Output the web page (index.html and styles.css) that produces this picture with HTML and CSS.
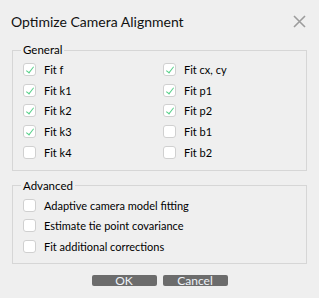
FILE: index.html
```html
<html>
<head>
	<title>Optimize Camera Alignment</title>
	<link rel="stylesheet" href="styles.css">
</head>
<body>

<div class="dialog">
	<div class="titlebar">
		<span class="title">Optimize Camera Alignment</span>
		<svg class="close" width="13" height="13" viewBox="0 0 13 13">
			<path d="M1 1L12 12M12 1L1 12" stroke="#9c9c9c" stroke-width="1.6" fill="none"/>
		</svg>
	</div>

	<fieldset class="group">
		<legend>General</legend>
		<div class="grid">
			<label class="check on"><span class="box"></span>Fit f</label>
			<label class="check on"><span class="box"></span>Fit cx, cy</label>
			<label class="check on"><span class="box"></span>Fit k1</label>
			<label class="check on"><span class="box"></span>Fit p1</label>
			<label class="check on"><span class="box"></span>Fit k2</label>
			<label class="check on"><span class="box"></span>Fit p2</label>
			<label class="check on"><span class="box"></span>Fit k3</label>
			<label class="check"><span class="box"></span>Fit b1</label>
			<label class="check"><span class="box"></span>Fit k4</label>
			<label class="check"><span class="box"></span>Fit b2</label>
		</div>
	</fieldset>

	<fieldset class="group advanced">
		<legend>Advanced</legend>
		<div class="list">
			<label class="check"><span class="box"></span>Adaptive camera model fitting</label>
			<label class="check"><span class="box"></span>Estimate tie point covariance</label>
			<label class="check"><span class="box"></span>Fit additional corrections</label>
		</div>
	</fieldset>

	<div class="buttons">
		<button class="btn">OK</button>
		<button class="btn">Cancel</button>
	</div>
</div>

</body>
</html>
```

FILE: styles.css
```css
body {
	margin: 0;
	background: #efefef;
	font-family: Lato, sans-serif;
	font-size: 11px;
	color: #000000;
}
.dialog {
	display: flex;
	flex-direction: column;
}
.titlebar {
	height: 42px;
	display: flex;
	align-items: center;
	justify-content: space-between;
	padding: 0 13px 0 11px;
}
.title {
	font-size: 14px;
	color: #111111;
}
.close {
	display: block;
}
.group {
	margin: 0 12px;
	padding: 0 0 0 8px;
	border: 1px solid #d6d6d6;
	min-width: 0;
}
.group legend {
	padding: 0 2px;
	line-height: 16px;
	font-size: 11.5px;
}
.grid {
	display: grid;
	grid-template-columns: 140px 1fr;
	grid-auto-rows: 20.75px;
	padding: 1px 0 7px 2px;
}
.list {
	display: flex;
	flex-direction: column;
	padding: 1px 0 7px 2px;
}
.list .check {
	height: 20.5px;
}
.advanced {
	margin-top: 7px;
}
.check {
	display: flex;
	align-items: center;
	white-space: nowrap;
}
.box {
	width: 11px;
	height: 11px;
	border: 1px solid #d0d0d0;
	border-radius: 3px;
	background: #ffffff;
	margin-right: 8px;
	flex: none;
	position: relative;
}
.on .box::after {
	content: "";
	position: absolute;
	left: 3.5px;
	top: 1px;
	width: 3px;
	height: 7px;
	border-right: 1.5px solid #58d08a;
	border-bottom: 1.5px solid #58d08a;
	transform: rotate(38deg);
}
.buttons {
	display: flex;
	justify-content: center;
	gap: 6px;
	margin-top: 11px;
}
.btn {
	width: 65px;
	height: 11px;
	padding: 0;
	border: none;
	border-radius: 2px;
	background: #6c6c6c;
	color: #eef2f8;
	font-family: Lato, sans-serif;
	font-size: 12px;
	line-height: 11px;
}
```
